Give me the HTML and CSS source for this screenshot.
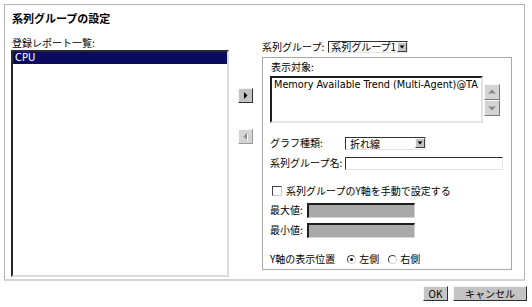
FILE: index.html
```html
<!DOCTYPE html>
<html lang="ja">
<head>
    <meta charset="UTF-8">
    <meta name="viewport" content="width=device-width, initial-scale=1.0">
    <title>系列グループの設定</title>
    <link rel="stylesheet" href="styles.css">
</head>
<body>
    <div class="panel">
        <h1 class="title">系列グループの設定</h1>

        <div class="columns">
            <div class="report-col">
                <div class="label">登録レポート一覧:</div>
                <div class="listbox">
                    <div class="list-item selected">CPU</div>
                </div>
            </div>

            <div class="move-col">
                <button class="arrow-btn">
                    <svg width="13" height="13" viewBox="0 0 13 13"><polygon points="5,3 5,10 8.5,6.5" fill="#000"/></svg>
                </button>
                <button class="arrow-btn disabled">
                    <svg width="13" height="13" viewBox="0 0 13 13"><polygon points="8,3 8,10 4.5,6.5" fill="#fff" transform="translate(1,1)"/><polygon points="8,3 8,10 4.5,6.5" fill="#8a8a8a"/></svg>
                </button>
            </div>

            <div class="group-col">
                <div class="group-row">
                    <span>系列グループ:</span>
                    <div class="select group-select">
                        <span class="select-value">系列グループ1</span>
                        <span class="select-btn"><svg width="8" height="8" viewBox="0 0 8 8"><polygon points="1.5,2.5 6.5,2.5 4,5.5" fill="#000"/></svg></span>
                    </div>
                </div>

                <div class="group-box">
                    <div class="label">表示対象:</div>
                    <div class="target-row">
                        <div class="textarea">Memory Available Trend (Multi-Agent)@TA</div>
                        <div class="spinner">
                            <span class="spin-btn"><svg width="14" height="14" viewBox="0 0 14 14"><polygon points="3,8.5 11,8.5 7,4.5" fill="#8a8a8a"/></svg></span>
                            <span class="spin-btn"><svg width="14" height="14" viewBox="0 0 14 14"><polygon points="3,5.5 11,5.5 7,9.5" fill="#8a8a8a"/></svg></span>
                        </div>
                    </div>

                    <div class="option-row graph-row">
                        <span class="option-label">グラフ種類:</span>
                        <div class="select graph-select">
                            <span class="select-value">折れ線</span>
                            <span class="select-btn"><svg width="8" height="8" viewBox="0 0 8 8"><polygon points="1.5,2.5 6.5,2.5 4,5.5" fill="#000"/></svg></span>
                        </div>
                    </div>

                    <div class="option-row">
                        <span class="option-label">系列グループ名:</span>
                        <div class="text-input name-input"></div>
                    </div>

                    <div class="option-row check-row">
                        <span class="checkbox"></span>
                        <span>系列グループのY軸を手動で設定する</span>
                    </div>

                    <div class="option-row">
                        <span class="short-label">最大値:</span>
                        <div class="text-input range-input"></div>
                    </div>

                    <div class="option-row">
                        <span class="short-label">最小値:</span>
                        <div class="text-input range-input"></div>
                    </div>

                    <div class="option-row axis-row">
                        <span class="axis-label">Y軸の表示位置</span>
                        <span class="radio checked"></span>
                        <span class="radio-text">左側</span>
                        <span class="radio"></span>
                        <span class="radio-text">右側</span>
                    </div>
                </div>
            </div>
        </div>
    </div>

    <div class="footer">
        <button class="btn ok-btn">OK</button>
        <button class="btn cancel-btn">キャンセル</button>
    </div>
</body>
</html>
```

FILE: styles.css
```css
* {
    box-sizing: border-box;
}

body {
    margin: 0;
    background: #fff;
    color: #000;
    font-family: "Noto Sans CJK JP", "DejaVu Sans", sans-serif;
    font-size: 10px;
    line-height: 14px;
}

.panel {
    margin: 4px 7px 0 4px;
    border: 1px solid #b4b4b4;
    border-bottom: 2px solid #d4d4d4;
    padding: 6px 11px 2px 6px;
}

.title {
    margin: 0 0 11px 1px;
    font-size: 11px;
    font-weight: bold;
    line-height: 14px;
}

.columns {
    display: flex;
    align-items: flex-start;
}

.label {
    height: 14px;
    padding-left: 1px;
}

.report-col {
    width: 218px;
}

.listbox {
    height: 227px;
    border: 2px solid;
    border-color: #2a2a2a #dcdcdc #dcdcdc #2a2a2a;
    background: #fff;
}

.list-item {
    height: 12px;
    padding-left: 2px;
    font-family: "DejaVu Sans", sans-serif;
    font-size: 10px;
    line-height: 12px;
}

.list-item.selected {
    background: #0a0a5e;
    color: #fff;
}

.move-col {
    width: 33px;
    padding: 52px 0 0 9px;
    display: flex;
    flex-direction: column;
    gap: 26px;
}

.arrow-btn {
    width: 15px;
    height: 15px;
    padding: 0;
    margin: 0;
    background: #c4c4c4;
    border: 1px solid;
    border-color: #f4f4f4 #303030 #303030 #f4f4f4;
    display: flex;
    align-items: center;
    justify-content: center;
}

.arrow-btn.disabled {
    background: #d4d4d4;
    border-color: #fafafa #9a9a9a #9a9a9a #fafafa;
}

.group-col {
    width: 250px;
}

.group-row {
    height: 21px;
    display: flex;
    align-items: center;
    gap: 4px;
}

.select {
    display: flex;
    align-items: center;
    height: 12px;
    background: #fff;
    border: 1px solid;
    border-color: #303030 #e4e4e4 #e4e4e4 #303030;
}

.select-value {
    flex: 1;
    padding-left: 2px;
    line-height: 10px;
    white-space: nowrap;
}

.select-btn {
    width: 10px;
    height: 10px;
    flex-shrink: 0;
    background: #c4c4c4;
    border: 1px solid;
    border-color: #f4f4f4 #404040 #404040 #f4f4f4;
    display: flex;
    align-items: center;
    justify-content: center;
}

.group-select {
    width: 80px;
}

.group-box {
    height: 213px;
    border: 1px solid #a8a8a8;
    padding: 2px 0 0 7px;
}

.target-row {
    margin-top: 2px;
    display: flex;
    align-items: center;
    gap: 1px;
}

.textarea {
    width: 213px;
    height: 47px;
    border: 2px solid;
    border-color: #1e1e1e #e4e4e4 #e4e4e4 #1e1e1e;
    padding: 1px 0 0 2px;
    font-family: "DejaVu Sans Condensed", "DejaVu Sans", sans-serif;
    font-size: 10.8px;
    line-height: 12px;
    white-space: nowrap;
    overflow: hidden;
}

.spinner {
    display: flex;
    flex-direction: column;
}

.spin-btn {
    width: 16px;
    height: 16px;
    background: #d4d4d4;
    border: 1px solid;
    border-color: #f8f8f8 #7a7a7a #7a7a7a #f8f8f8;
    display: flex;
    align-items: center;
    justify-content: center;
}

.option-row {
    height: 20px;
    display: flex;
    align-items: center;
}

.graph-row {
    margin-top: 10px;
}

.option-label {
    width: 75px;
}

.graph-select {
    width: 81px;
    height: 13px;
}

.graph-select .select-value {
    padding-left: 4px;
    line-height: 11px;
}

.text-input {
    height: 13px;
    background: #fff;
    border: 1px solid;
    border-color: #303030 #e4e4e4 #e4e4e4 #303030;
}

.name-input {
    width: 158px;
}

.check-row {
    height: 18px;
    margin-top: 9px;
    gap: 4px;
    padding-left: 2px;
}

.checkbox {
    width: 10px;
    height: 10px;
    background: #fff;
    border: 1px solid;
    border-color: #404040 #c8c8c8 #c8c8c8 #404040;
}

.short-label {
    width: 37px;
}

.range-input {
    width: 108px;
    height: 15px;
    background: #a9a9a9;
    border-width: 2px 1px 1px 2px;
    border-color: #1e1e1e #d4d4d4 #d4d4d4 #1e1e1e;
}

.axis-row {
    margin-top: 9px;
}

.axis-label {
    margin-right: 12px;
}

.radio {
    width: 9px;
    height: 9px;
    border-radius: 50%;
    background: #fff;
    border: 1px solid;
    border-color: #404040 #d0d0d0 #d0d0d0 #404040;
    margin-right: 3px;
    position: relative;
}

.radio.checked::after {
    content: "";
    position: absolute;
    left: 2px;
    top: 2px;
    width: 3px;
    height: 3px;
    border-radius: 50%;
    background: #000;
}

.radio-text {
    margin-right: 9px;
}

.footer {
    display: flex;
    justify-content: flex-end;
    gap: 5px;
    margin: 5px 5px 0 0;
}

.btn {
    height: 15px;
    padding: 0;
    margin: 0;
    background: #c4c4c4;
    border: 1px solid;
    border-color: #f4f4f4 #303030 #303030 #f4f4f4;
    font-family: "Noto Sans CJK JP", "DejaVu Sans", sans-serif;
    font-size: 10px;
    line-height: 12px;
    color: #000;
}

.ok-btn {
    width: 25px;
}

.cancel-btn {
    width: 74px;
}
```
